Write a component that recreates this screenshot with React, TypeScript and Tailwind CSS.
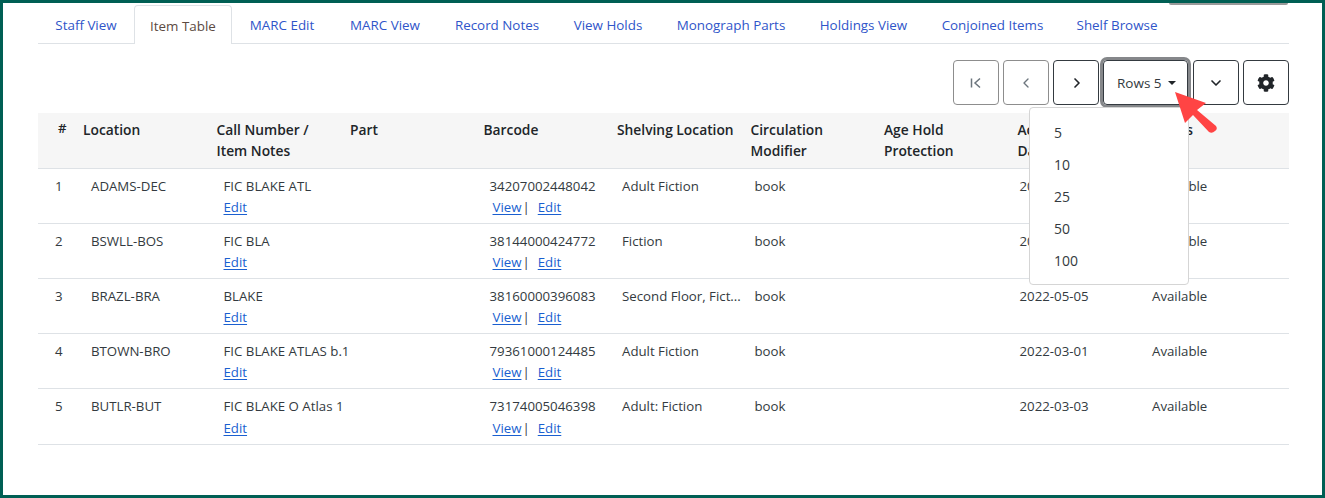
import { ChevronDown, ChevronLeft, ChevronRight } from "lucide-react";
import { FaCog } from "react-icons/fa";

const tabs = [
  { label: "Staff View", width: "w-[96px]" },
  { label: "Item Table", width: "w-[98px]", active: true },
  { label: "MARC Edit", width: "w-[100px]" },
  { label: "MARC View", width: "w-[106px]" },
  { label: "Record Notes", width: "w-[118px]" },
  { label: "View Holds", width: "w-[104px]" },
  { label: "Monograph Parts", width: "w-[142px]" },
  { label: "Holdings View", width: "w-[123px]" },
  { label: "Conjoined Items", width: "w-[135px]" },
  { label: "Shelf Browse", width: "w-[114px]" },
];

const rows = [
  ["1", "ADAMS-DEC", "FIC BLAKE ATL", "34207002448042", "Adult Fiction", "book", "2022-03-01", "Available"],
  ["2", "BSWLL-BOS", "FIC BLA", "38144000424772", "Fiction", "book", "2022-03-01", "Available"],
  ["3", "BRAZL-BRA", "BLAKE", "38160000396083", "Second Floor, Fict...", "book", "2022-05-05", "Available"],
  ["4", "BTOWN-BRO", "FIC BLAKE ATLAS b.1", "79361000124485", "Adult Fiction", "book", "2022-03-01", "Available"],
  ["5", "BUTLR-BUT", "FIC BLAKE O Atlas 1", "73174005046398", "Adult: Fiction", "book", "2022-03-03", "Available"],
];

const gridCols = "grid grid-cols-[45px_133.5px_133.5px_133.5px_133.5px_133.5px_133.5px_133.5px_133.5px_1fr]";
const linkClass = "text-[#1a5fd0] underline underline-offset-2";
const pageBtn = "flex h-[45px] w-[46px] items-center justify-center rounded border";

function Header({ children }: { children: React.ReactNode }) {
  return <div className="text-[13.8px] font-semibold leading-[21px] text-[#212529]">{children}</div>;
}

export default function App() {
  return (
    <div className="relative h-[498px] w-[1325px] border-[3px] border-[#005f54] bg-white text-[13.25px] text-[#333a40] font-['Open_Sans','Noto_Sans',sans-serif]">
      {/* leftover button edge at the top */}
      <div className="absolute right-[34px] top-0 h-[2px] w-[119px] rounded-b bg-[#9a9a9a]" />

      <div className="flex flex-col pl-[35px] pr-[33px] pt-[2px]">
        <div className="flex h-[39px] border-b border-[#dee2e6] text-[13.4px]">
          {tabs.map((tab) => (
            <div
              key={tab.label}
              className={
                tab.active
                  ? `${tab.width} -mb-px flex h-[39px] items-center justify-center rounded-t border border-b-0 border-[#dee2e6] bg-white pt-[2px] text-[#5c4a42]`
                  : `${tab.width} flex items-center justify-center pt-[3px] text-[#2f55c9]`
              }
            >
              {tab.label}
            </div>
          ))}
        </div>

        <div className="flex h-[69px] items-center justify-end gap-[4px] pt-[8px]">
          <div className={`${pageBtn} border-[#8d8d8d] text-[#6c757d]`}>
            <svg width="14" height="14" viewBox="0 0 14 14" fill="none" stroke="currentColor" strokeWidth="1.5">
              <path d="M2.5 2.5v9M11 2.5 6 7l5 4.5" />
            </svg>
          </div>
          <div className={`${pageBtn} border-[#8d8d8d] text-[#6c757d]`}>
            <ChevronLeft size={16} strokeWidth={2} />
          </div>
          <div className={`${pageBtn} border-[#343a40] text-[#212529]`}>
            <ChevronRight size={16} strokeWidth={2.5} className="ml-[1px]" />
          </div>
          <div className="mr-[1px] flex h-[45px] w-[85px] items-center gap-[6px] rounded border border-[#343a40] pl-[13px] text-[13.5px] text-[#333a40] shadow-[0_0_0_3px_#85878a]">
            <span className="pt-[1px]">Rows 5</span>
            <span className="h-0 w-0 border-x-[4px] border-t-[4px] border-x-transparent border-t-[#212529]" />
          </div>
          <div className={`${pageBtn} border-[#343a40] text-[#212529]`}>
            <ChevronDown size={16} strokeWidth={2.5} />
          </div>
          <div className={`${pageBtn} border-[#343a40] text-[#212529]`}>
            <FaCog size={18} className="-ml-[1px]" />
          </div>
        </div>

        <div className={`${gridCols} h-[56px] border-b border-[#dee2e6] bg-[#f6f6f6] pt-[6px]`}>
          <div className="pl-[20px] font-semibold text-[#212529]">#</div>
          <Header>Location</Header>
          <Header>Call Number /<br />Item Notes</Header>
          <Header>Part</Header>
          <Header>Barcode</Header>
          <Header>Shelving Location</Header>
          <Header>Circulation<br />Modifier</Header>
          <Header>Age Hold<br />Protection</Header>
          <Header>Active<br />Date</Header>
          <Header>Status</Header>
        </div>

        {rows.map((row) => {
          const isLast = row[0] === "5";
          const linkRow = isLast ? "mt-[1px]" : "";
          return (
            <div
              key={row[0]}
              className={`${gridCols} ${isLast ? "h-[56px]" : "h-[55px]"} border-b border-[#dee2e6] pt-[7px] leading-[21px]`}
            >
              <div className="pl-[17px]">{row[0]}</div>
              <div className="pl-[8px]">{row[1]}</div>
              <div className="whitespace-nowrap pl-[7px]">
                <div>{row[2]}</div>
                <div className={linkRow}>
                  <a className={linkClass}>Edit</a>
                </div>
              </div>
              <div />
              <div className="pl-[6px]">
                <div>{row[3]}</div>
                <div className={`pl-[3px] ${linkRow}`}>
                  <a className={linkClass}>View</a>
                  <span className="ml-[1px] mr-[8px]">|</span>
                  <a className={linkClass}>Edit</a>
                </div>
              </div>
              <div className="truncate pl-[5px]">{row[4]}</div>
              <div className="pl-[4px]">{row[5]}</div>
              <div />
              <div className="pl-[2px]">{row[6]}</div>
              <div className="pl-[1px]">{row[7]}</div>
            </div>
          );
        })}
      </div>

      {/* rows-per-page menu */}
      <div className="absolute left-[1026px] top-[104px] flex h-[178px] w-[160px] flex-col rounded border border-[#d5d5d5] bg-white py-[8px] pl-[24px] text-[14px] text-[#333a40]">
        {["5", "10", "25", "50", "100"].map((n) => (
          <div key={n} className="flex h-[32px] items-center">{n}</div>
        ))}
      </div>

      {/* red annotation arrow */}
      <svg className="absolute left-[1169px] top-[86px]" width="48" height="48" viewBox="0 0 48 48">
        <path d="M3 3 L34 14 L25 21 L44 37 Q46 40 43 42 Q40 45 37 43 L21 26 L13 34 Z" fill="#ff4444" />
      </svg>
    </div>
  );
}
